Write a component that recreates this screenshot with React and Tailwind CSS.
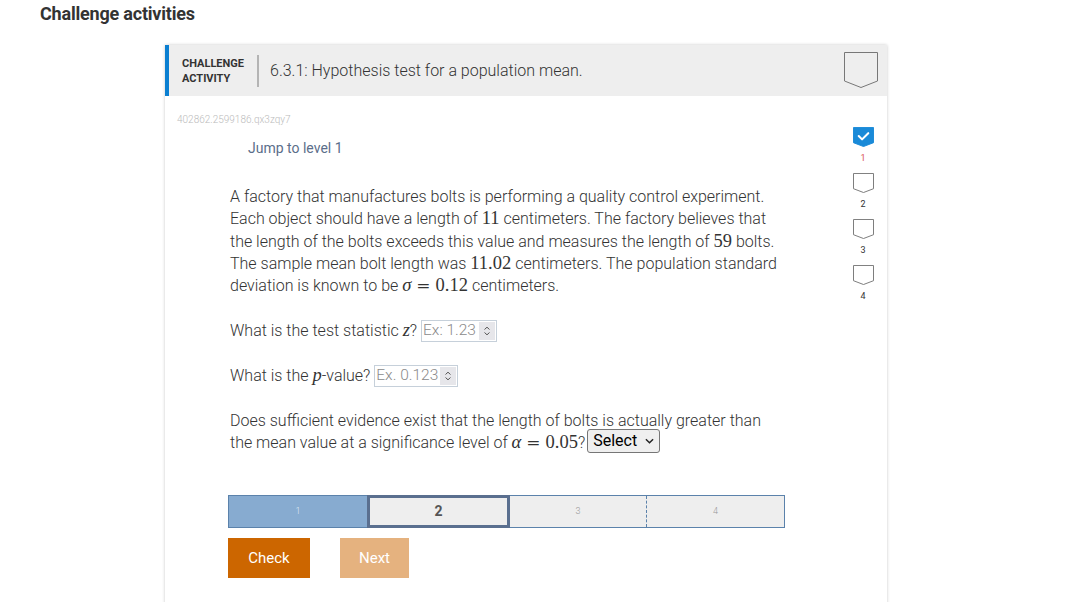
import React from "react";

const Shield = ({ className, filled = false }) => (
  <svg viewBox="0 0 22 21" className={className}>
    <path
      d="M0.5 0.5 H21.5 V16.5 L11 20.5 L0.5 16.5 Z"
      fill={filled ? "#1a8ad8" : "#fff"}
      stroke={filled ? "#1a8ad8" : "#777"}
      strokeWidth="1"
    />
    {filled && (
      <path
        d="M6 9.5 L9.5 13 L16 6.5"
        fill="none"
        stroke="#fff"
        strokeWidth="2.2"
        strokeLinecap="round"
        strokeLinejoin="round"
      />
    )}
  </svg>
);

const M = ({ children, italic }) => (
  <span
    className={`font-['Liberation_Serif',serif] text-[18.5px] font-normal leading-none ${
      italic ? "italic" : ""
    }`}
  >
    {children}
  </span>
);

const Eq = () => (
  <span className="mx-[5px] font-['DejaVu_Serif',serif] text-[17px] font-normal leading-none">
    =
  </span>
);

const NumInput = ({ placeholder, width }) => (
  <span
    className={`relative inline-flex h-[22px] ${width} -my-1 items-center border border-[#c6d0da] bg-white align-[1px]`}
  >
    <span className="pl-[1px] text-[15.5px] leading-none text-[#8a8a8a]">
      {placeholder}
    </span>
    <span className="ml-auto mr-[1px] flex h-[18px] w-[16px] flex-col items-center justify-center bg-[#e6e6ea]">
      <svg viewBox="0 0 8 10" className="h-[10px] w-[8px]">
        <path
          d="M1.5 3.5 L4 1.2 L6.5 3.5 M1.5 6.5 L4 8.8 L6.5 6.5"
          fill="none"
          stroke="#555"
          strokeWidth="1"
        />
      </svg>
    </span>
  </span>
);

const levels = [1, 2, 3, 4];

export default function App() {
  return (
    <div className="min-h-screen bg-white font-['Roboto',sans-serif] font-light text-[#333]">
      <h1 className="pl-10 pt-[2px] text-[18px] font-bold leading-6 tracking-[-0.2px] text-[#333]">
        Challenge activities
      </h1>

      <div className="ml-[165px] mt-[19px] w-[722px] bg-white shadow-[0_0_3px_rgba(0,0,0,0.22)]">
        {/* Header */}
        <div className="flex h-[51px] items-center border-l-4 border-[#0b7fd1] bg-[#eeeeee] pl-[13px] pr-[9px]">
          <div className="text-[11px] font-bold leading-[15px] text-[#333]">
            CHALLENGE
            <br />
            ACTIVITY
          </div>
          <div className="ml-[13px] h-[32px] w-[2px] bg-[#b4b4b4]" />
          <div className="ml-[11px] text-[16px] text-[#333]">
            6.3.1: Hypothesis test for a population mean.
          </div>
          <svg viewBox="0 0 34 37" className="ml-auto h-[37px] w-[34px]">
            <path
              d="M0.5 0.5 H33.5 V29 L17 35.5 L0.5 29 Z"
              fill="none"
              stroke="#777"
              strokeWidth="1"
            />
          </svg>
        </div>

        {/* Body */}
        <div className="flex min-h-[520px]">
          <div className="flex-1 pl-[12px] pt-[17px]">
            <div className="text-[10px] leading-[13px] text-[#bbbbbb]">
              402862.2599186.qx3zqy7
            </div>
            <div className="ml-[71px] mt-[12px] text-[14px] font-normal text-[#5b6e8a]">
              Jump to level 1
            </div>

            <div className="ml-[53px] w-[560px]">
              <p className="mt-[27px] w-[556px] text-[16px] leading-[22.3px] text-[#333]">
                A factory that manufactures bolts is performing a quality
                control experiment. Each object should have a length of{" "}
                <M>11</M> centimeters. The factory believes that the length of
                the bolts exceeds this value and measures the length of{" "}
                <M>59</M> bolts. The sample mean bolt length was <M>11.02</M>{" "}
                centimeters. The population standard deviation is known to be{" "}
                <M italic>σ</M>
                <Eq />
                <M>0.12</M> centimeters.
              </p>

              <p className="mt-[23px] text-[16px] leading-[22px]">
                What is the test statistic <M italic>z</M>?{" "}
                <NumInput placeholder="Ex: 1.23" width="w-[76px]" />
              </p>

              <p className="mt-[23px] text-[16px] leading-[22px]">
                What is the <M italic>p</M>-value?{" "}
                <NumInput placeholder="Ex. 0.123" width="w-[84px]" />
              </p>

              <p className="mt-[23px] w-[545px] text-[16px] leading-[22px]">
                Does sufficient evidence exist that the length of bolts is
                actually greater than the mean value at a significance level of{" "}
                <M italic>α</M>
                <Eq />
                <M>0.05</M>?
                <span className="relative -my-2 ml-[2px] inline-flex h-[24px] w-[73px] items-center justify-between rounded-[3px] border border-[#767676] bg-[#efefef] pl-[5px] pr-[5px] align-[2px] text-[16px] font-normal text-black">
                  Select
                  <svg viewBox="0 0 10 6" className="h-[6px] w-[9px]">
                    <path
                      d="M1 1 L5 5 L9 1"
                      fill="none"
                      stroke="#222"
                      strokeWidth="1.6"
                    />
                  </svg>
                </span>
              </p>

              {/* Level bar */}
              <div className="-ml-[2px] mt-[41px] flex h-[33px] w-[557px] border border-[#5b82ab] bg-[#eeeeee]">
                <div className="flex w-[138px] items-center justify-center bg-[#87abd0] text-[9px] text-[#dfe8f2]">
                  1
                </div>
                <div className="-my-[1px] flex w-[143px] items-center justify-center border-[3px] border-[#5a6f8f] text-[14px] font-bold text-[#555]">
                  2
                </div>
                <div className="flex w-[137px] items-center justify-center border-r border-dashed border-[#5b82ab] text-[9px] text-[#999]">
                  3
                </div>
                <div className="flex flex-1 items-center justify-center text-[9px] text-[#999]">
                  4
                </div>
              </div>

              <div className="-ml-[2px] mt-[10px] flex gap-[30px]">
                <button className="h-[40px] w-[82px] bg-[#cc6600] text-[15px] font-normal text-white">
                  Check
                </button>
                <button className="h-[40px] w-[69px] bg-[#e5b27f] text-[15px] font-normal text-white">
                  Next
                </button>
              </div>
            </div>
          </div>

          {/* Levels column */}
          <div className="flex w-[35px] flex-col items-center pr-[13px] pt-[31px]">
            {levels.map((l) => (
              <div key={l} className="flex flex-col items-center">
                <Shield className="h-[20px] w-[21px]" filled={l === 1} />
                <span
                  className={`mb-[10px] mt-[6px] text-[9px] font-normal leading-[10px] ${
                    l === 1 ? "text-[#d9534f]" : "text-[#333]"
                  }`}
                >
                  {l}
                </span>
              </div>
            ))}
          </div>
        </div>
      </div>
    </div>
  );
}
